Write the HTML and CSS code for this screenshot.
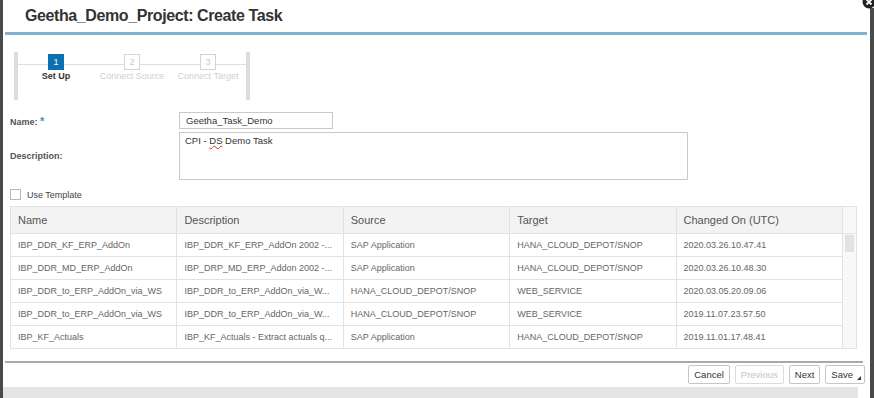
FILE: index.html
```html
<!DOCTYPE html>
<html lang="en">

<head>
    <meta charset="UTF-8">
    <title>Create Task</title>
    <link rel="stylesheet" href="styles.css">
</head>

<body>
    <div class="dialog">
        <svg class="close-btn" width="14" height="14" viewBox="0 0 14 14">
            <circle cx="7" cy="7" r="6.5" fill="#222" />
            <path d="M4.5 4.5 L9.5 9.5 M9.5 4.5 L4.5 9.5" stroke="#fff" stroke-width="1.8" />
        </svg>
        <div class="dialog-head">
            <h1 class="dialog-title">Geetha_Demo_Project: Create Task</h1>
        </div>
        <div class="head-rule"></div>

        <div class="dialog-body">
            <div class="stepper">
                <div class="stepper-line"></div>
                <div class="step active">
                    <div class="step-num">1</div>
                    <div class="step-label">Set Up</div>
                </div>
                <div class="step">
                    <div class="step-num">2</div>
                    <div class="step-label">Connect Source</div>
                </div>
                <div class="step">
                    <div class="step-num">3</div>
                    <div class="step-label">Connect Target</div>
                </div>
            </div>

            <div class="form-row name-row">
                <label class="form-label">Name: <span class="req">*</span></label>
                <div class="input">Geetha_Task_Demo</div>
            </div>
            <div class="form-row desc-row">
                <label class="form-label">Description:</label>
                <div class="textarea">CPI - <span class="typo">DS</span> Demo Task</div>
            </div>

            <div class="check-row">
                <span class="checkbox"></span>
                <span>Use Template</span>
            </div>

            <div class="grid-wrap">
                <table class="grid">
                    <thead>
                        <tr>
                            <th>Name</th>
                            <th>Description</th>
                            <th>Source</th>
                            <th>Target</th>
                            <th>Changed On (UTC)</th>
                            <th class="scroll-col"></th>
                        </tr>
                    </thead>
                    <tbody>
                        <tr>
                            <td>IBP_DDR_KF_ERP_AddOn</td>
                            <td>IBP_DDR_KF_ERP_AddOn 2002 -...</td>
                            <td>SAP Application</td>
                            <td>HANA_CLOUD_DEPOT/SNOP</td>
                            <td>2020.03.26.10.47.41</td>
                            <td class="scroll-col" rowspan="5"><div class="thumb"></div></td>
                        </tr>
                        <tr>
                            <td>IBP_DDR_MD_ERP_AddOn</td>
                            <td>IBP_DRP_MD_ERP_Addon 2002 -...</td>
                            <td>SAP Application</td>
                            <td>HANA_CLOUD_DEPOT/SNOP</td>
                            <td>2020.03.26.10.48.30</td>
                        </tr>
                        <tr>
                            <td>IBP_DDR_to_ERP_AddOn_via_WS</td>
                            <td>IBP_DDR_to_ERP_AddOn_via_W...</td>
                            <td>HANA_CLOUD_DEPOT/SNOP</td>
                            <td>WEB_SERVICE</td>
                            <td>2020.03.05.20.09.06</td>
                        </tr>
                        <tr>
                            <td>IBP_DDR_to_ERP_AddOn_via_WS</td>
                            <td>IBP_DDR_to_ERP_AddOn_via_W...</td>
                            <td>HANA_CLOUD_DEPOT/SNOP</td>
                            <td>WEB_SERVICE</td>
                            <td>2019.11.07.23.57.50</td>
                        </tr>
                        <tr>
                            <td>IBP_KF_Actuals</td>
                            <td>IBP_KF_Actuals - Extract actuals q...</td>
                            <td>SAP Application</td>
                            <td>HANA_CLOUD_DEPOT/SNOP</td>
                            <td>2019.11.01.17.48.41</td>
                        </tr>
                    </tbody>
                </table>
            </div>
        </div>

        <div class="foot-rule"></div>
        <div class="dialog-foot">
            <button class="btn">Cancel</button>
            <button class="btn" disabled>Previous</button>
            <button class="btn">Next</button>
            <button class="btn btn-menu">Save</button>
        </div>
        <div class="bottom-strip"></div>
    </div>
</body>

</html>
```

FILE: styles.css
```css
body {
    margin: 0;
    background: #fff;
    font-family: "Liberation Sans", Arial, sans-serif;
    color: #333;
    overflow: hidden;
}

.dialog {
    position: relative;
    width: 867px;
    height: 398px;
    border-left: 3px solid #4a4a4a;
    box-sizing: border-box;
}

/* barra escura da direita, comeca um pouco abaixo do topo */
.dialog::after {
    content: '';
    position: absolute;
    top: 8px;
    right: -7px;
    width: 4px;
    height: 390px;
    background: #4a4a4a;
}

.close-btn {
    position: absolute;
    top: -5px;
    right: -9px;
    z-index: 2;
}

.dialog-head {
    height: 32px;
    display: flex;
    align-items: center;
    padding-left: 22px;
}

.dialog-title {
    margin: 0;
    font-size: 16px;
    font-weight: bold;
    color: #333;
    letter-spacing: -0.4px;
}

.head-rule {
    height: 3px;
    margin: 0 0 0 2px;
    background: #80b2cf;
}

.dialog-body {
    padding: 17px 0 0 7px;
}

/* stepper */
.stepper {
    position: relative;
    display: flex;
    width: 228px;
    height: 48px;
    margin-left: 4px;
    border-left: 4px solid #dcdcdc;
    border-right: 4px solid #dcdcdc;
}

.stepper-line {
    position: absolute;
    top: 12px;
    left: 0;
    right: 0;
    height: 1px;
    background: #dedede;
}

.step {
    position: relative;
    width: 76px;
    display: flex;
    flex-direction: column;
    align-items: center;
    padding-top: 2px;
}

.step-num {
    width: 14px;
    height: 14px;
    border: 1px solid #d4d4d4;
    background: #fff;
    color: #c8c8c8;
    font-size: 9px;
    line-height: 14px;
    text-align: center;
}

.step-label {
    margin-top: 1px;
    font-size: 9px;
    color: #cfcfcf;
    white-space: nowrap;
}

.step.active .step-num {
    background: #0b6fb1;
    border-color: #0b6fb1;
    color: #fff;
}

.step.active .step-label {
    color: #333;
    font-weight: bold;
}

/* form */
.form-row {
    display: flex;
}

.form-label {
    width: 169px;
    font-size: 9px;
    font-weight: bold;
    color: #555;
}

.req {
    color: #3a8fc6;
    font-size: 11px;
}

.name-row {
    margin-top: 12px;
    align-items: center;
}

.input {
    width: 146px;
    height: 15px;
    border: 1px solid #c9c9c9;
    padding-left: 6px;
    font-size: 9.5px;
    line-height: 15px;
    color: #333;
}

.desc-row {
    margin-top: 3px;
    align-items: center;
}

.textarea {
    width: 502px;
    height: 44px;
    border: 1px solid #c9c9c9;
    padding: 2px 0 0 5px;
    font-size: 9.5px;
    color: #333;
    align-self: flex-start;
}

.typo {
    text-decoration: underline wavy #d33;
    text-decoration-thickness: 1px;
}

.check-row {
    display: flex;
    align-items: center;
    gap: 6px;
    margin-top: 9px;
    font-size: 9px;
    color: #444;
}

.checkbox {
    width: 9px;
    height: 9px;
    border: 1px solid #b8b8b8;
    background: #fff;
}

/* tabela */
.grid-wrap {
    margin-top: 6px;
    width: 847px;
}

.grid {
    width: 100%;
    border-collapse: collapse;
    table-layout: fixed;
    border: 1px solid #e2e2e2;
}

.grid th,
.grid td {
    border: 1px solid #e2e2e2;
    text-align: left;
    padding: 0 0 0 7px;
    white-space: nowrap;
    overflow: hidden;
}

.grid th {
    height: 26px;
    background: #f3f3f3;
    font-size: 11px;
    font-weight: normal;
    color: #555;
}

.grid td {
    height: 22px;
    font-size: 9px;
    color: #666;
}

.grid th.scroll-col,
.grid td.scroll-col {
    width: 6px;
    background: #f8f8f8;
    vertical-align: top;
}

.thumb {
    width: 9px;
    height: 17px;
    margin-top: 1px;
    margin-left: -5px;
    background: #e2e2e2;
}

/* rodape */
.foot-rule {
    margin: 12px 4px 0 2px;
    height: 2px;
    background: #a9a9a9;
}

.dialog-foot {
    display: flex;
    justify-content: flex-end;
    gap: 5px;
    padding: 2px 2px 0 0;
    height: 21px;
}

.btn {
    position: relative;
    height: 19px;
    padding: 0 5px;
    border: 1px solid #c6c6c6;
    border-radius: 2px;
    background: #fff;
    font-family: inherit;
    font-size: 9.5px;
    color: #333;
}

.btn:disabled {
    color: #c4c4c4;
    border-color: #dcdcdc;
}

.btn-menu {
    padding-right: 11px;
}

/* triangulo de menu no botao save */
.btn-menu::after {
    content: '';
    position: absolute;
    right: 3px;
    bottom: 3px;
    border-left: 4px solid transparent;
    border-bottom: 4px solid #333;
}

.bottom-strip {
    margin: 1px 9px 0 0;
    height: 15px;
    background: #e5e5e5;
}
```
